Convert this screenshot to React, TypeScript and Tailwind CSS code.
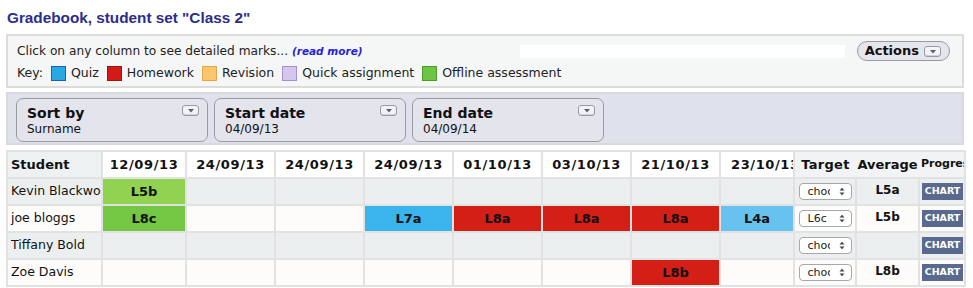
import { useState } from "react";

type Cell = { mark: string; color: string } | null;

const DATES = [
  "12/09/13",
  "24/09/13",
  "24/09/13",
  "24/09/13",
  "01/10/13",
  "03/10/13",
  "21/10/13",
  "23/10/13",
];

const KEY = [
  { label: "Quiz", fill: "bg-[#29a8e2]", border: "border-[#1f5fb8]" },
  { label: "Homework", fill: "bg-[#d21b18]", border: "border-[#9a1410]" },
  { label: "Revision", fill: "bg-[#fec66b]", border: "border-[#e0a84e]" },
  { label: "Quick assignment", fill: "bg-[#d5c6ef]", border: "border-[#a590cc]" },
  { label: "Offline assessment", fill: "bg-[#6cc644]", border: "border-[#4f9a2f]" },
];

const STUDENTS: {
  name: string;
  marks: Cell[];
  target: string;
  average: string;
}[] = [
  {
    name: "Kevin Blackwood",
    marks: [{ mark: "L5b", color: "bg-[#91d251]" }, null, null, null, null, null, null, null],
    target: "choc",
    average: "L5a",
  },
  {
    name: "joe bloggs",
    marks: [
      { mark: "L8c", color: "bg-[#73c743]" },
      null,
      null,
      { mark: "L7a", color: "bg-[#3bb3ed]" },
      { mark: "L8a", color: "bg-[#d31f16]" },
      { mark: "L8a", color: "bg-[#d31f16]" },
      { mark: "L8a", color: "bg-[#d31f16]" },
      { mark: "L4a", color: "bg-[#68c2ef]" },
    ],
    target: "L6c",
    average: "L5b",
  },
  {
    name: "Tiffany Bold",
    marks: [null, null, null, null, null, null, null, null],
    target: "choc",
    average: "",
  },
  {
    name: "Zoe Davis",
    marks: [null, null, null, null, null, null, { mark: "L8b", color: "bg-[#d31f16]" }, null],
    target: "choc",
    average: "L8b",
  },
];

const COL_WIDTHS = [95, 84, 89, 89, 89, 89, 89, 89, 74, 62, 63, 46];

function DropIcon() {
  return (
    <span className="flex h-[11px] w-[17px] items-center justify-center rounded-[3px] border border-[#9a9aa4] bg-[#f3f3f7] shadow-[inset_0_-1px_0_#d0d0da]">
      <svg width="8" height="5" viewBox="0 0 8 5">
        <path d="M1 1 L7 1 L4 4.5 Z" fill="#5b5f70" />
      </svg>
    </span>
  );
}

function FilterBox({ title, value }: { title: string; value: string }) {
  return (
    <div className="flex h-[44px] w-[192px] shrink-0 items-start justify-between rounded-[7px] border border-[#9a9a9e] bg-[#e3e4ec] pl-[10px] pr-[8px] pt-[6px]">
      <div className="flex flex-col">
        <span className="text-[14px] font-bold leading-[16px] text-[#111]">{title}</span>
        <span className="text-[12px] leading-[16px] text-[#111]">{value}</span>
      </div>
      <DropIcon />
    </div>
  );
}

function TargetSelect({ value }: { value: string }) {
  return (
    <div className="mx-auto flex h-[17px] w-[53px] items-center justify-between rounded-[4px] border border-[#a8a8a8] bg-white pl-[8px] pr-[6px] text-[11px] leading-none text-[#222]">
      <span className="w-[22px] overflow-hidden whitespace-nowrap">{value}</span>
      <svg width="6" height="9" viewBox="0 0 6 9">
        <path d="M0.5 3.5 L3 0.8 L5.5 3.5 Z" fill="#444" />
        <path d="M0.5 5.5 L3 8.2 L5.5 5.5 Z" fill="#444" />
      </svg>
    </div>
  );
}

export default function App() {
  const [showMore] = useState(false);

  return (
    <div
      className="h-[288px] w-[973px] overflow-hidden bg-white px-[6px] text-[#222]"
      style={{ fontFamily: '"DejaVu Sans", Verdana, sans-serif' }}
    >
      <h1
        className="pb-[7px] pl-[1px] pt-[9px] text-[15.3px] font-bold leading-[18px] text-[#2d2d8a]"
        style={{ fontFamily: '"Liberation Sans", Arial, sans-serif' }}
      >
        Gradebook, student set "Class 2"
      </h1>

      <div className="w-[958px] border-2 border-[#dcdcdc] bg-[#f5f6f6] pb-[2px] pl-[9px] pr-[12px] pt-[4px]">
        <div className="flex h-[22px] items-center">
          <span className="text-[12.2px] leading-none">
            Click on any column to see detailed marks...{" "}
            <span className="text-[10.5px] font-bold italic text-[#2323d8]">
              {showMore ? "(hide)" : "(read more)"}
            </span>
          </span>
          <div className="ml-auto mr-[12px] h-[13px] w-[325px] bg-white" />
          <button className="flex h-[20px] w-[93px] items-center justify-end gap-[5px] rounded-full border border-[#9a9a9e] bg-[#e4e5ed] pr-[8px] text-[13px] font-bold text-[#111]">
            Actions
            <DropIcon />
          </button>
        </div>
        <div className="flex h-[22px] items-center gap-[5px] text-[12.5px] leading-none">
          <span className="mr-[3px]">Key:</span>
          {KEY.map((k) => (
            <span key={k.label} className="mr-[3px] flex items-center gap-[5px]">
              <span className={`h-[15px] w-[15px] border ${k.fill} ${k.border}`} />
              <span>{k.label}</span>
            </span>
          ))}
        </div>
      </div>

      <div className="mt-[4px] flex h-[53px] w-[958px] gap-[6px] border-2 border-[#dadada] bg-[#dfe1ec] pl-[8px] pt-[4px]">
        <FilterBox title="Sort by" value="Surname" />
        <FilterBox title="Start date" value="04/09/13" />
        <FilterBox title="End date" value="04/09/14" />
      </div>

      <table className="mt-[5px] w-[958px] table-fixed border-collapse text-[12.5px]">
        <colgroup>
          {COL_WIDTHS.map((w, i) => (
            <col key={i} style={{ width: w }} />
          ))}
        </colgroup>
        <thead>
          <tr className="h-[27px]">
            <th className="border-2 border-[#e2e2e2] bg-[#eef1f2] pl-[3px] text-left text-[13px] font-bold text-[#111]">
              Student
            </th>
            {DATES.map((d, i) => (
              <th
                key={i}
                className={`overflow-hidden whitespace-nowrap border-2 border-[#e2e2e2] bg-white text-[13px] font-bold tracking-[0.6px] text-[#111] ${
                  i === DATES.length - 1 ? "pl-[10px] text-left" : ""
                }`}
              >
                {d}
              </th>
            ))}
            <th className="border-y-2 border-l-2 border-[#e2e2e2] bg-[#f1f3f4] text-[13px] font-bold tracking-[0.3px] text-[#111]">
              Target
            </th>
            <th className="border-y-2 border-[#e2e2e2] bg-[#f1f3f4] text-[13px] font-bold text-[#111]">
              Average
            </th>
            <th className="overflow-hidden whitespace-nowrap border-y-2 border-r-2 border-[#e2e2e2] bg-[#f1f3f4] pl-[2px] text-left text-[11px] font-bold text-[#111]">
              Progress
            </th>
          </tr>
        </thead>
        <tbody>
          {STUDENTS.map((s, r) => {
            const rowBg = r % 2 === 0 ? "bg-[#eceff0]" : "bg-[#fdfcfb]";
            return (
              <tr key={s.name} className={`h-[27px] ${rowBg}`}>
                <td className="overflow-hidden whitespace-nowrap border-2 border-[#e2e2e2] pl-[3px] text-[12.5px] text-[#111]">
                  {s.name}
                </td>
                {s.marks.map((m, i) => (
                  <td
                    key={i}
                    className={`border-2 border-[#e2e2e2] text-center text-[13px] font-bold text-[#111] ${m ? m.color : ""}`}
                  >
                    {m ? m.mark : ""}
                  </td>
                ))}
                <td className="border-2 border-[#e2e2e2]">
                  <TargetSelect value={s.target} />
                </td>
                <td className="border-2 border-[#e2e2e2] pb-[3px] text-center text-[12px] font-bold text-[#111]">
                  {s.average}
                </td>
                <td className="border-2 border-[#e2e2e2] pl-[2px]">
                  <button className="flex h-[17px] w-[41px] items-center justify-center bg-[#5a6a8e] text-[9.5px] font-bold text-white">
                    CHART
                  </button>
                </td>
              </tr>
            );
          })}
        </tbody>
      </table>
    </div>
  );
}
